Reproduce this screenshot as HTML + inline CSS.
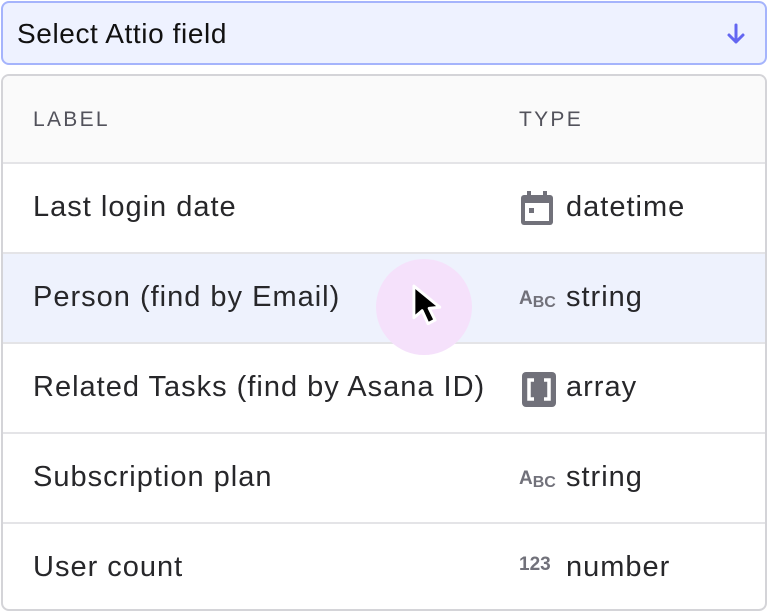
<!DOCTYPE html><html><head><style>
body{margin:0;width:768px;height:613px;background:#fff;font-family:"Liberation Sans",sans-serif;position:relative;overflow:hidden}
.sel{position:absolute;left:1px;top:1px;border:2px solid #a5b4fc;border-radius:8px;background:#eef2ff;box-sizing:border-box;width:766px;height:64px}
.sel span{position:absolute;left:14px;top:15px;font-size:28px;color:#111;letter-spacing:0.6px}
.panel{position:absolute;left:1px;top:74px;width:766px;height:537px;border:2px solid #d4d4d8;border-radius:8px;box-sizing:border-box;overflow:hidden}
.hd{height:86px;background:#fafafa;border-bottom:2px solid #e4e4e7;position:relative;color:#52525b;font-size:21px;letter-spacing:2.3px}
.row{height:88px;border-bottom:2px solid #e4e4e7;position:relative;font-size:29px;letter-spacing:1px;color:#27272a}
.row:last-child{border-bottom:none}
.l{position:absolute;left:30px;top:27px}
.t{position:absolute;left:563px;top:27px}
.ic{position:absolute;left:516px;top:27px}
.abc{position:absolute;left:516px;top:34px;font-size:19px;font-weight:bold;color:#71717a;letter-spacing:0}
.abc i{font-style:normal;font-size:16px;position:relative;top:3px}
</style></head><body>
<div class="sel"><span>Select Attio field</span>
<svg style="position:absolute;left:722px;top:19px" width="22" height="24" viewBox="0 0 22 24"><path d="M11 3V20M4 13l7 7 7-7" stroke="#6366f1" stroke-width="3" fill="none" stroke-linecap="round" stroke-linejoin="round"/></svg></div>
<div class="panel">
<div class="hd"><span style="position:absolute;left:30px;top:32px">LABEL</span><span style="position:absolute;left:516px;top:32px">TYPE</span></div>
<div class="row"><span class="l">Last login date</span>
<svg class="ic" width="36" height="36" viewBox="0 0 36 36"><rect x="2" y="4" width="32" height="30" rx="3" fill="#71717a"/><rect x="8" y="0" width="4" height="6" fill="#71717a"/><rect x="24" y="0" width="4" height="6" fill="#71717a"/><rect x="6" y="12" width="24" height="18" fill="#fff"/><rect x="10" y="17" width="5" height="5" fill="#71717a"/></svg>
<span class="t">datetime</span></div>
<div class="row" style="background:#eef2fd"><span class="l">Person (find by Email)</span>
<div style="position:absolute;left:373px;top:5px;width:96px;height:96px;border-radius:50%;background:#f5e1fb"></div>
<svg style="position:absolute;left:405px;top:28px" width="40" height="48" viewBox="0 0 34 40"><path d="M5 3L5 30L12 24L17 35L23 32L18 22L27 21Z" fill="#000" stroke="#fff" stroke-width="2.5" stroke-linejoin="round"/></svg>
<span class="abc">A<i>B</i><i>C</i></span><span class="t">string</span></div>
<div class="row"><span class="l">Related Tasks (find by Asana ID)</span>
<svg class="ic" width="38" height="38" viewBox="0 0 38 38"><rect x="3" y="1" width="34" height="35" rx="4" fill="#71717a"/><path d="M15 9h-5v19h5M25 9h5v19h-5" stroke="#fff" stroke-width="3.5" fill="none"/></svg>
<span class="t">array</span></div>
<div class="row"><span class="l">Subscription plan</span><span class="abc">A<i>B</i><i>C</i></span><span class="t">string</span></div>
<div class="row"><span class="l">User count</span><span class="abc" style="top:30px">123</span><span class="t">number</span></div>
</div>
</body></html>
